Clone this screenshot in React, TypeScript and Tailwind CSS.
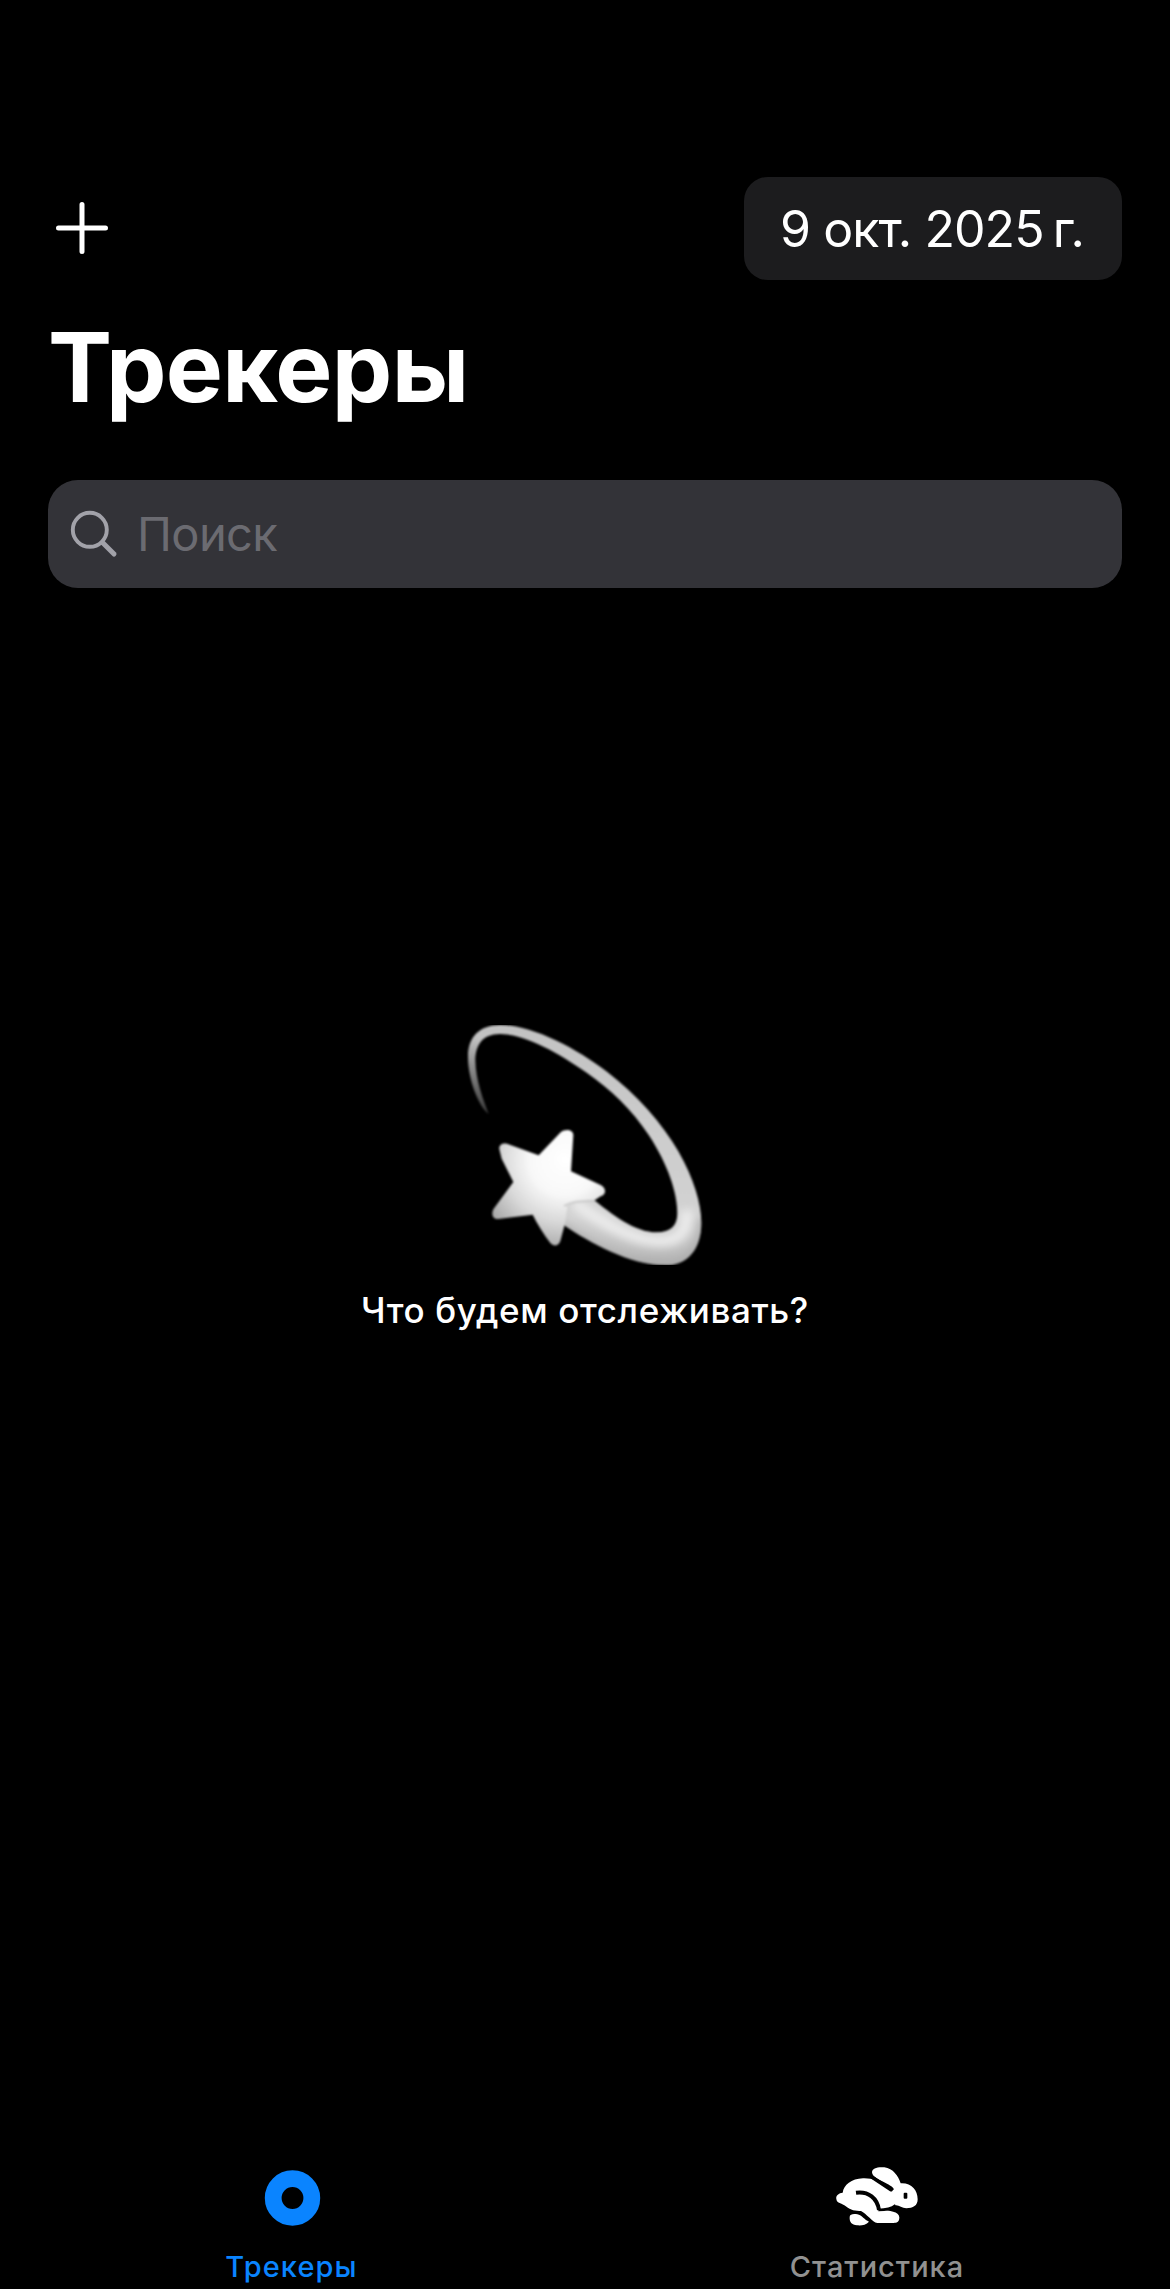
function PlusIcon() {
  return (
    <svg className="block h-[54px] w-[54px]" viewBox="0 0 54 54" fill="none" stroke="white" strokeWidth="5" strokeLinecap="round">
      <path d="M27 3.5v47M3.5 27h47" />
    </svg>
  );
}

function SearchIcon() {
  return (
    <svg className="block h-[48px] w-[48px] shrink-0" viewBox="0 0 48 48" fill="none" stroke="#a2a2a9" strokeLinecap="round">
      <circle cx="19.8" cy="19.8" r="17" strokeWidth="3.9" />
      <path d="M32.5 32.5 44 44" strokeWidth="5" />
    </svg>
  );
}

function DizzyStar() {
  return (
    <svg className="block h-[240px] w-[240px]" viewBox="75 75 720 720">
      <defs>
        <linearGradient id="orbit" x1="0" y1="75" x2="0" y2="795" gradientUnits="userSpaceOnUse">
          <stop offset="0" stopColor="#c2c2c2" />
          <stop offset="0.5" stopColor="#cdcdcd" />
          <stop offset="0.8" stopColor="#d2d2d2" />
          <stop offset="1" stopColor="#b4b4b4" />
        </linearGradient>
        <linearGradient id="tail" x1="170" y1="120" x2="140" y2="345" gradientUnits="userSpaceOnUse">
          <stop offset="0" stopColor="white" />
          <stop offset="1" stopColor="#444" />
        </linearGradient>
        <mask id="tailFade" maskUnits="userSpaceOnUse" x="0" y="0" width="870" height="870">
          <rect width="870" height="870" fill="white" />
          <rect width="200" height="345" fill="url(#tail)" />
        </mask>
        <clipPath id="orbitClip">
          <path d="M372 676C450 728 570 796 676 796C742 796 784 748 784 668C782 580 740 490 690 420L680 500C700 550 712 590 712 640C712 678 692 697 650 697C585 697 515 643 458 596L360 580Z" />
        </clipPath>
        <radialGradient id="star" cx="375" cy="480" r="265" gradientUnits="userSpaceOnUse">
          <stop offset="0" stopColor="#ffffff" />
          <stop offset="0.4" stopColor="#f8f8f8" />
          <stop offset="0.7" stopColor="#d9d9d9" />
          <stop offset="1" stopColor="#acacac" />
        </radialGradient>
        <filter id="soft" x="-10%" y="-10%" width="120%" height="120%">
          <feGaussianBlur stdDeviation="3.8" />
        </filter>
        <filter id="shade" filterUnits="userSpaceOnUse" x="250" y="400" width="640" height="500">
          <feGaussianBlur stdDeviation="12" />
        </filter>
      </defs>
      <g filter="url(#soft)">
        <g mask="url(#tailFade)">
          <path
            fill="url(#orbit)"
            d="M146 342C116 320 85 240 84 175C82 112 118 75 180 75C275 75 405 142 502 216C592 285 668 372 715 454C762 536 784 612 784 668C784 748 742 796 676 796C570 796 450 728 372 676L350 590L458 596C515 643 585 697 650 697C692 697 712 678 712 640C712 580 685 495 626 405C575 328 512 268 440 218C350 155 255 103 182 102C128 101 106 135 106 182C107 240 130 300 146 342Z"
          />
        </g>
        <g clipPath="url(#orbitClip)">
          <path d="M400 606C500 680 590 723 660 723C722 723 744 690 741 630" fill="none" stroke="#ebebeb" strokeWidth="38" filter="url(#shade)" />
          <path d="M360 674C460 745 560 802 680 799C750 797 795 735 788 655" fill="none" stroke="#a9a9a9" strokeWidth="20" filter="url(#shade)" />
        </g>
        <path
          fill="url(#star)"
          d="M178 448C176 434 188 428 203 432L296 466L362 397C375 385 400 388 400 405L393 514L482 555C499 564 500 584 482 589L465 600C430 602 400 606 382 616L378 650L372 682L361 723C356 739 340 740 331 729C312 704 292 672 278 644L176 657C158 658 153 642 160 628L220 546L185 476Z"
        />
        <path d="M372 618C398 602 430 604 463 602" stroke="#c6c6c6" strokeWidth="7" fill="none" opacity="0.75" />
      </g>
    </svg>
  );
}

function RingIcon() {
  return (
    <svg className="block h-[60px] w-[60px]" viewBox="0 0 60 60" fill="none">
      <circle cx="29.5" cy="30" r="19.3" stroke="#0a84ff" strokeWidth="16.8" />
    </svg>
  );
}

function HareIcon() {
  return (
    <svg className="block h-[90px] w-[140px]" viewBox="-5 0 420 270">
      <defs>
        <filter id="hareSoft">
          <feGaussianBlur stdDeviation="2.2" />
        </filter>
      </defs>
      <g filter="url(#hareSoft)">
        <path
          fill="white"
          d="M80 147C78 136 88 129 99 128C102 105 125 86 160 85C190 84 205 95 220 105C232 114 242 122 250 121C258 116 244 107 232 101C215 92 187 82 187 67C187 54 205 50 224 52C250 55 266 78 273 100C305 98 324 120 324 148C324 167 310 175 290 175C278 175 268 166 260 166C250 177 227 180 212 180C240 182 268 184 269 202C269 215 263 219 252 219L203 219C188 217 170 190 154 183C132 184 120 178 104 166C92 158 82 160 80 147Z"
        />
        <path fill="white" d="M120 201C120 192 132 191 143 193C157 196 165 210 178 215C169 226 154 227 142 226C126 224 119 217 120 201Z" />
        <path d="M139 128C177 123 203 145 208 180" fill="none" stroke="black" strokeWidth="12" />
        <path d="M206 180C225 180 246 176 258 166" fill="none" stroke="black" strokeWidth="8" />
        <path d="M192 85 244 119" fill="none" stroke="black" strokeWidth="11" strokeLinecap="round" />
        <rect x="282" y="128" width="11" height="18" rx="3" fill="black" />
      </g>
    </svg>
  );
}

export default function App() {
  return (
    <div className="flex h-[2289px] w-[1170px] flex-col overflow-hidden bg-black font-['Inter','Liberation_Sans',sans-serif] text-white">
      <header className="flex h-[280px] items-end justify-between pr-12 pl-[55px]">
        <button className="mb-[25px]" aria-label="Добавить">
          <PlusIcon />
        </button>
        <button className="flex h-[103px] w-[378px] items-center justify-center rounded-[24px] bg-[#1c1c1e] text-[50px] leading-none tracking-[-0.9px] whitespace-nowrap">
          <span className="mr-[2px]">9 окт. 2025{"\u202f"}г.</span>
        </button>
      </header>
      <h1 className="mt-[37px] ml-12 h-[100px] self-start text-[96px] leading-[100px] font-bold tracking-[-0.7px] whitespace-nowrap">
        Трекеры
      </h1>
      <label className="mx-12 mt-[63px] flex h-[108px] shrink-0 items-center rounded-[30px] bg-[#333338] pl-[22px]">
        <SearchIcon />
        <span className="ml-[19px] -translate-y-px text-[47px] leading-none tracking-[-0.6px] text-[#6b6b71]">Поиск</span>
      </label>
      <main className="flex flex-1 flex-col items-center pt-[437px]">
        <DizzyStar />
        <p className="mt-[23px] text-[35px] leading-[44px] font-medium tracking-[0.62px] whitespace-nowrap">Что будем отслеживать?</p>
      </main>
      <nav className="grid h-[139px] grid-cols-2">
        <button className="flex flex-col items-center">
          <span className="mt-[18px] h-[60px]">
            <RingIcon />
          </span>
          <span className="mt-[21px] mr-[2px] text-[29px] leading-[36px] font-medium tracking-[1.1px] text-[#0a84ff]">Трекеры</span>
        </button>
        <button className="flex flex-col items-center">
          <span className="h-[78px]">
            <HareIcon />
          </span>
          <span className="mt-[21px] mr-[1px] text-[29px] leading-[36px] font-medium tracking-[1px] text-[#919191]">Статистика</span>
        </button>
      </nav>
    </div>
  );
}
